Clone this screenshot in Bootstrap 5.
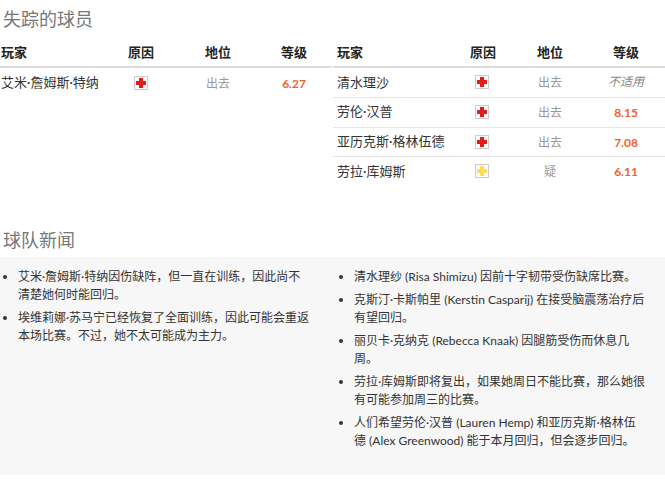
<!DOCTYPE html>
<html lang="zh">
<head>
<meta charset="utf-8">
<title>失踪的球员</title>
<link href="https://cdn.jsdelivr.net/npm/bootstrap@5.3.0/dist/css/bootstrap.min.css" rel="stylesheet">
<style>
html,body{height:481px;overflow:hidden}
body{font-family:Lato,"Noto Sans CJK SC",sans-serif;font-size:13px;color:#222;background:#fff}
.sect-title{font-size:18px;font-weight:400;color:#777;line-height:24px;margin:0;padding:7px 3px 0}
.tables-wrap{margin-top:7px;height:190px}
.half-l{width:332px}
.half-r{width:332px;margin-left:1px}
.pt{width:100%;table-layout:fixed;border-collapse:collapse;margin:0}
.pt th{font-size:13px;font-weight:700;color:#222;height:29px;padding:2px 0 0;border-bottom:2px solid #ddd;text-align:center;vertical-align:middle}
.pt td{height:30px;padding:0;text-align:center;vertical-align:middle;border-bottom:1px solid #e6e6e6;color:#333}
.pt tbody tr:nth-child(3) td{height:29px}
.pt tr:last-child td{border-bottom:0}
.pt .nm{text-align:left;padding-left:4px}
.half-l .pt .nm{padding-left:1px}
.half-l .pt td{border-bottom:0}
.half-l .pt .end{padding-right:6px}
.half-r .pt .end{padding-right:4px}
.pt td.stat{color:#999;font-size:12px;padding-top:2px}
.pt td.rate{color:#f0622a;font-size:12px;font-weight:700;padding-top:2px}
.pt td.na{color:#888;font-size:12px;font-style:italic}
.pt td.rsn{padding-right:2px}
.half-l .pt td.rsn{padding-right:0}
.ic{display:block;margin:0 auto}
.news-title{padding-top:0}
.news-box{background:#f7f7f7;height:218px;margin-top:5px}
.news-col{font-size:12px;line-height:18px;color:#333}
.news-col ul{margin:0;padding:11px 22px 0 18px}
.news-col li{margin-bottom:5px}
.news-l{width:332px}
.news-r{width:333px}
.news-r ul{padding-left:22px;padding-right:18px}
</style>
</head>
<body>
<h2 class="sect-title">失踪的球员</h2>
<div class="d-flex tables-wrap">
  <div class="half-l">
    <table class="pt">
      <colgroup><col style="width:108px"><col style="width:66px"><col style="width:88px"><col></colgroup>
      <thead><tr><th class="nm">玩家</th><th>原因</th><th>地位</th><th class="end">等级</th></tr></thead>
      <tbody>
        <tr><td class="nm">艾米·詹姆斯·特纳</td><td class="rsn"><svg class="ic" width="14" height="14" viewBox="0 0 14 14"><rect x=".5" y=".5" width="13" height="13" fill="#fff" stroke="#ccc"/><path d="M5 2h4v3h3v4H9v3H5V9H2V5h3z" fill="#e51a1a"/></svg></td><td class="stat">出去</td><td class="rate end">6.27</td></tr>
      </tbody>
    </table>
  </div>
  <div class="half-r">
    <table class="pt">
      <colgroup><col style="width:124px"><col style="width:52px"><col style="width:82px"><col></colgroup>
      <thead><tr><th class="nm">玩家</th><th>原因</th><th>地位</th><th class="end">等级</th></tr></thead>
      <tbody>
        <tr><td class="nm">清水理沙</td><td class="rsn"><svg class="ic" width="14" height="14" viewBox="0 0 14 14"><rect x=".5" y=".5" width="13" height="13" fill="#fff" stroke="#ccc"/><path d="M5 2h4v3h3v4H9v3H5V9H2V5h3z" fill="#e51a1a"/></svg></td><td class="stat">出去</td><td class="na end">不适用</td></tr>
        <tr><td class="nm">劳伦·汉普</td><td class="rsn"><svg class="ic" width="14" height="14" viewBox="0 0 14 14"><rect x=".5" y=".5" width="13" height="13" fill="#fff" stroke="#ccc"/><path d="M5 2h4v3h3v4H9v3H5V9H2V5h3z" fill="#e51a1a"/></svg></td><td class="stat">出去</td><td class="rate end">8.15</td></tr>
        <tr><td class="nm">亚历克斯·格林伍德</td><td class="rsn"><svg class="ic" width="14" height="14" viewBox="0 0 14 14"><rect x=".5" y=".5" width="13" height="13" fill="#fff" stroke="#ccc"/><path d="M5 2h4v3h3v4H9v3H5V9H2V5h3z" fill="#e51a1a"/></svg></td><td class="stat">出去</td><td class="rate end">7.08</td></tr>
        <tr><td class="nm">劳拉·库姆斯</td><td class="rsn"><svg class="ic" width="14" height="14" viewBox="0 0 14 14"><rect x=".5" y=".5" width="13" height="13" fill="#fff" stroke="#ccc"/><path d="M5 2h4v3h3v4H9v3H5V9H2V5h3z" fill="#ffdc55"/></svg></td><td class="stat">疑</td><td class="rate end">6.11</td></tr>
      </tbody>
    </table>
  </div>
</div>
<h2 class="sect-title news-title">球队新闻</h2>
<div class="news-box d-flex">
  <div class="news-col news-l">
    <ul>
      <li>艾米·詹姆斯·特纳因伤缺阵，但一直在训练，因此尚不清楚她何时能回归。</li>
      <li>埃维莉娜·苏马宁已经恢复了全面训练，因此可能会重返本场比赛。不过，她不太可能成为主力。</li>
    </ul>
  </div>
  <div class="news-col news-r">
    <ul>
      <li>清水理纱 (Risa Shimizu) 因前十字韧带受伤缺席比赛。</li>
      <li>克斯汀·卡斯帕里 (Kerstin Casparij) 在接受脑震荡治疗后有望回归。</li>
      <li>丽贝卡·克纳克 (Rebecca Knaak) 因腿筋受伤而休息几周。</li>
      <li>劳拉·库姆斯即将复出，如果她周日不能比赛，那么她很有可能参加周三的比赛。</li>
      <li>人们希望劳伦·汉普 (Lauren Hemp) 和亚历克斯·格林伍德 (Alex Greenwood) 能于本月回归，但会逐步回归。</li>
    </ul>
  </div>
</div>
</body>
</html>
